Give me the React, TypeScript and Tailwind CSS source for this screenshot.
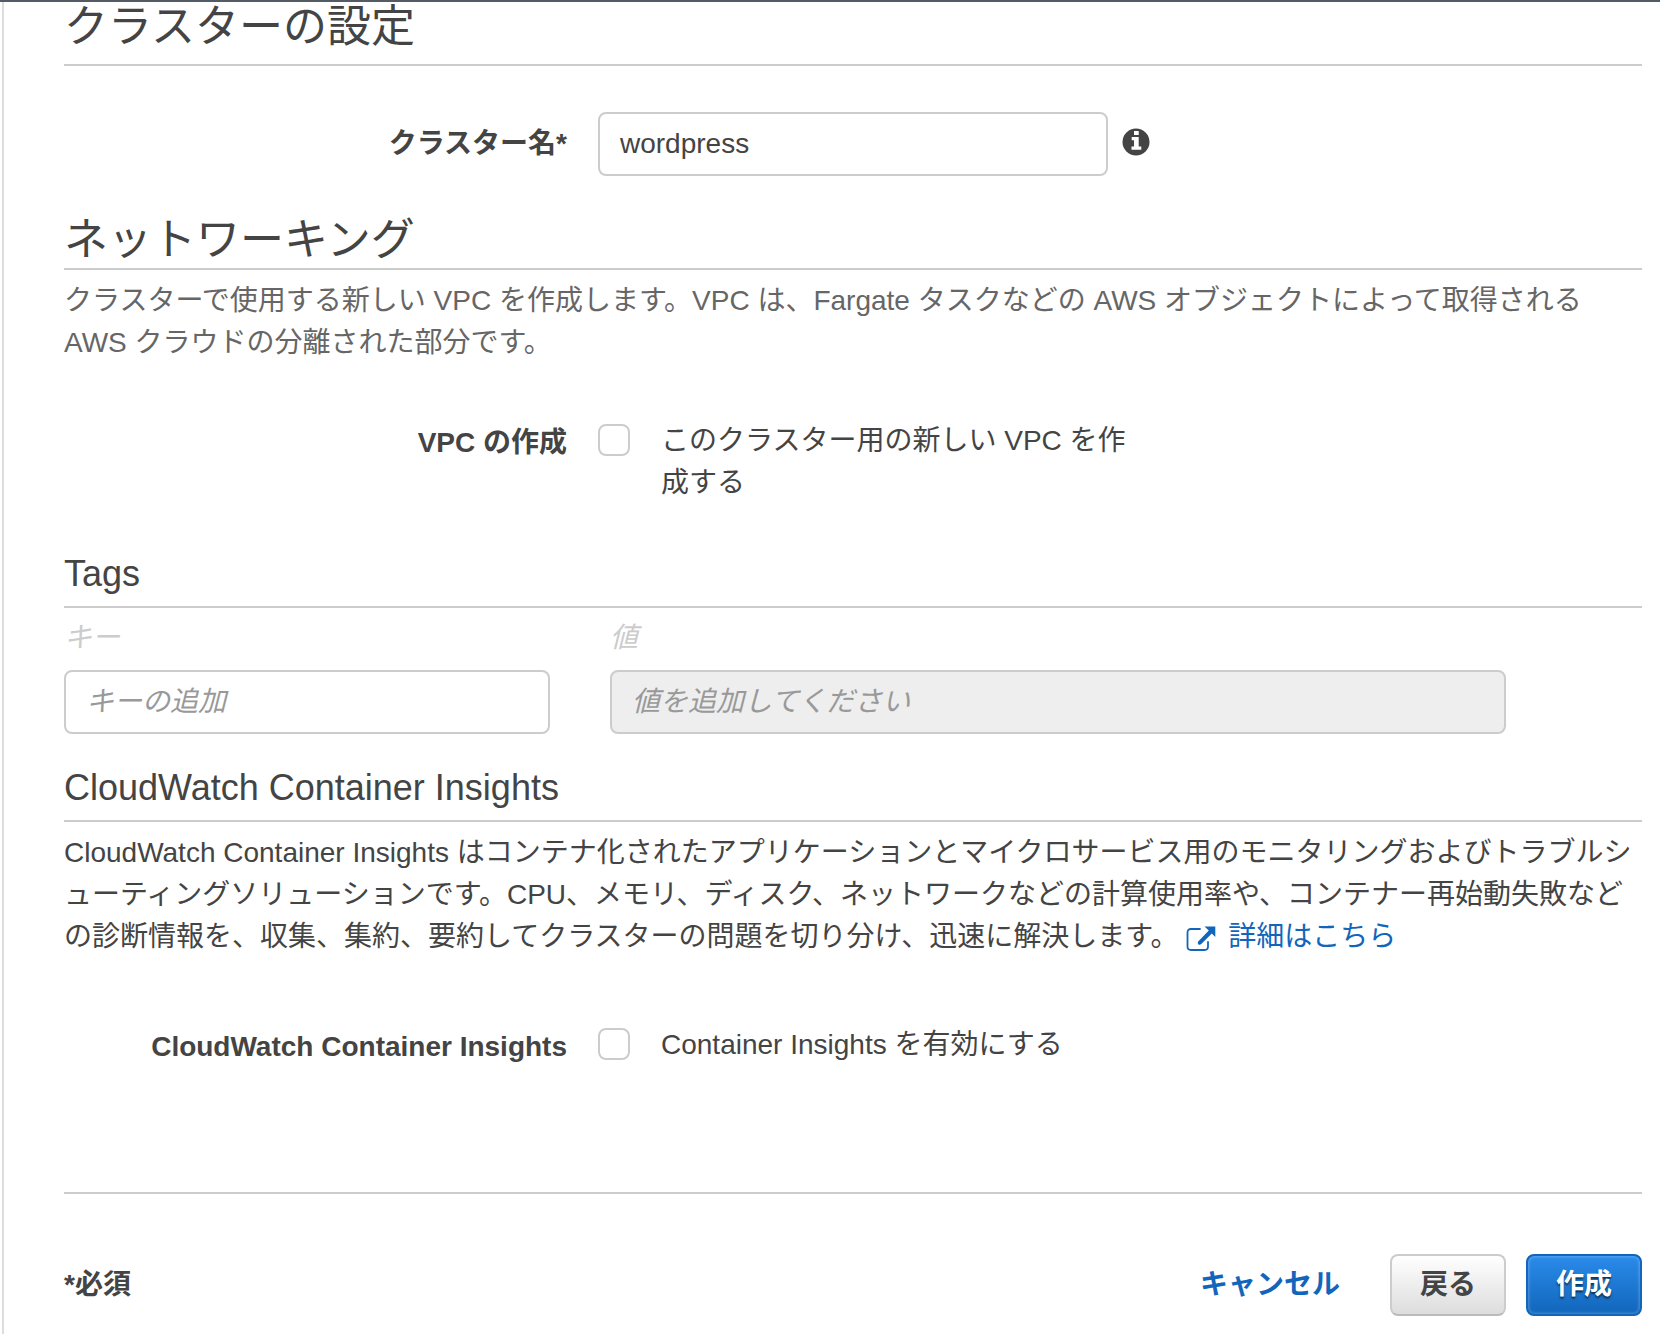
import type { ReactNode } from "react";

/* Section title with the full-width rule under it */
function SectionTitle({ children, className = "" }: { children: ReactNode; className?: string }) {
  return (
    <h2 className={`border-b-2 border-[#ccc] text-[44px] leading-12 ${className}`}>{children}</h2>
  );
}

function SubTitle({ children, className = "" }: { children: ReactNode; className?: string }) {
  return (
    <h3 className={`border-b-2 border-[#ccc] text-4xl leading-12 pb-2 ${className}`}>{children}</h3>
  );
}

/* Label on the left, control on the right */
function FormRow({
  label,
  htmlFor,
  className = "",
  labelClassName = "",
  children,
}: {
  label: string;
  htmlFor: string;
  className?: string;
  labelClassName?: string;
  children: ReactNode;
}) {
  return (
    <div className={`flex gap-[31px] ${className}`}>
      <label
        htmlFor={htmlFor}
        className={`w-[503px] shrink-0 text-right font-bold ${labelClassName}`}
      >
        {label}
      </label>
      {children}
    </div>
  );
}

function Checkbox({ id, describedBy }: { id: string; describedBy: string }) {
  return (
    <input
      id={id}
      type="checkbox"
      aria-describedby={describedBy}
      className="mt-1 size-8 shrink-0 appearance-none rounded-lg border-2 border-[#ccc] bg-white checked:bg-[#1166bb]"
    />
  );
}

function InfoIcon() {
  return (
    <svg viewBox="0 0 28 28" className="size-7" aria-hidden="true">
      <circle cx="14" cy="14" r="13.500" fill="currentColor" />
      <path d="M12 3H16.700V7H12ZM9.700 9H16.700V18.500H19.300V21.800H9.500V18.500H12V12.200H9.700Z" fill="#fff" />
    </svg>
  );
}

function ExternalIcon() {
  return (
    <svg viewBox="0 0 30 28" className="mr-3 inline-block h-7 w-[30px] align-[-6px]" aria-hidden="true">
      <path
        d="M14 5H5Q1.500 5 1.500 8.500V22.500Q1.500 26 5 26H18.500Q22 26 22 22.500V18"
        fill="none"
        stroke="currentColor"
        strokeWidth="1.800"
        strokeLinecap="round"
      />
      <path
        d="M18.500 2.500H29.300V13L25.800 9.500L15 20.300Q13.500 21.300 12.200 20.200Q11.200 19 12.200 17.500L22.800 6.500Z"
        fill="currentColor"
      />
    </svg>
  );
}

export default function App() {
  return (
    <div
      lang="ja"
      className="border-t-2 border-[#545b64] bg-white font-['Liberation_Sans','Noto_Sans_CJK_JP',sans-serif] text-[28px] leading-[42px] text-[#444]"
    >
      <main className="ml-0.5 min-h-[1332px] border-l-2 border-[#ddd] pr-[18px] pl-[60px]">
        <SectionTitle className="pt-px pb-[13px]">クラスターの設定</SectionTitle>

        <FormRow label="クラスター名*" htmlFor="cluster-name" className="mt-[46px]" labelClassName="pt-[11px]">
          <div className="flex items-center gap-3.5">
            <input
              id="cluster-name"
              type="text"
              defaultValue="wordpress"
              className="h-16 w-[510px] rounded-lg border-2 border-[#ccc] px-5"
            />
            <button type="button" aria-label="クラスター名の情報" className="mb-1">
              <InfoIcon />
            </button>
          </div>
        </FormRow>

        <SectionTitle className="mt-10 pb-1">ネットワーキング</SectionTitle>
        <p className="mt-2.5 text-[#666]">
          クラスターで使用する新しい VPC を作成します。VPC は、Fargate タスクなどの AWS
          オブジェクトによって取得される AWS クラウドの分離された部分です。
        </p>

        <FormRow label="VPC の作成" htmlFor="create-vpc" className="mt-14" labelClassName="pt-0.5">
          <Checkbox id="create-vpc" describedBy="create-vpc-text" />
          <p id="create-vpc-text" className="w-[480px]">
            このクラスター用の新しい VPC を作成する
          </p>
        </FormRow>

        <SubTitle className="mt-[46px]">Tags</SubTitle>
        <div className="mt-[9px] flex gap-[60px] pr-[136px]">
          <div className="flex w-[486px] flex-col gap-[11px]">
            <label htmlFor="tag-key" className="text-[#ccc] italic">
              キー
            </label>
            <input
              id="tag-key"
              type="text"
              placeholder="キーの追加"
              className="h-16 rounded-lg border-2 border-[#ccc] px-5 placeholder:text-[#999] placeholder:italic"
            />
          </div>
          <div className="flex flex-1 flex-col gap-[11px]">
            <label htmlFor="tag-value" className="text-[#ccc] italic">
              値
            </label>
            <input
              id="tag-value"
              type="text"
              disabled
              placeholder="値を追加してください"
              className="h-16 rounded-lg border-2 border-[#ccc] bg-[#eee] px-5 placeholder:text-[#999] placeholder:italic"
            />
          </div>
        </div>

        <SubTitle className="mt-[30px]">CloudWatch Container Insights</SubTitle>
        <p className="mt-2.5 break-all">
          CloudWatch Container Insights
          はコンテナ化されたアプリケーションとマイクロサービス用のモニタリングおよびトラブルシューティングソリューションです。CPU、メモリ、ディスク、ネットワークなどの計算使用率や、コンテナー再始動失敗などの診断情報を、収集、集約、要約してクラスターの問題を切り分け、迅速に解決します。{" "}
          <a href="#" className="text-[#1166bb]">
            <ExternalIcon />
            詳細はこちら
          </a>
        </p>

        <FormRow
          label="CloudWatch Container Insights"
          htmlFor="container-insights"
          className="mt-[66px]"
          labelClassName="pt-0.5"
        >
          <Checkbox id="container-insights" describedBy="container-insights-text" />
          <p id="container-insights-text">Container Insights を有効にする</p>
        </FormRow>

        <footer className="mt-[124px] flex items-center border-t-2 border-[#ccc] pt-[60px] font-bold">
          <span className="mr-auto">*必須</span>
          <a href="#" className="mr-[50px] text-[#1166bb]">
            キャンセル
          </a>
          <button
            type="button"
            className="mr-5 h-[62px] w-[116px] rounded-lg border-2 border-[#ccc] border-b-[#bbb] bg-linear-to-b from-white to-[#ddd]"
          >
            戻る
          </button>
          <button
            type="button"
            className="h-[62px] w-[116px] rounded-lg border-2 border-[#1166bb] bg-linear-to-b from-[#2a8bea] to-[#1166bb] text-white shadow-[inset_0_0_3px_1px_rgba(255,255,255,0.25)] text-shadow-[0_2px_2px_rgba(0,0,0,0.6)]"
          >
            作成
          </button>
        </footer>
      </main>
    </div>
  );
}
